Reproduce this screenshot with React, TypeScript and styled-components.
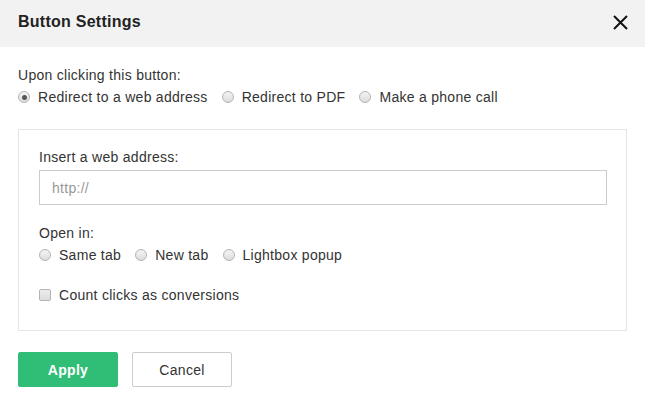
import React from 'react';
import styled, { createGlobalStyle } from 'styled-components';

const GlobalStyle = createGlobalStyle`
  html, body {
    margin: 0;
    padding: 0;
    background: #ffffff;
  }
  body {
    font-family: "Liberation Sans", Arial, sans-serif;
    font-size: 14px;
    letter-spacing: 0.28px;
    color: #333333;
  }
  * {
    box-sizing: border-box;
  }
`;

const Dialog = styled.div`
  width: 645px;
  height: 403px;
  background: #ffffff;
  display: flex;
  flex-direction: column;
`;

const Header = styled.div`
  height: 47px;
  flex-shrink: 0;
  background: #f2f2f2;
  display: flex;
  align-items: center;
  justify-content: space-between;
  padding: 0 16px 0 18px;
`;

const Title = styled.h1`
  margin: 0;
  font-size: 16px;
  font-weight: bold;
  letter-spacing: 0.25px;
  color: #222222;
  line-height: 20px;
  padding-bottom: 4px;
`;

const CloseButton = styled.button`
  width: 18px;
  height: 18px;
  padding: 0;
  border: none;
  background: none;
  display: flex;
  align-items: center;
  justify-content: center;
  margin-bottom: 3px;
  cursor: pointer;
`;

const Body = styled.div`
  padding: 17px 18px 0;
  display: flex;
  flex-direction: column;
`;

const Line = styled.div`
  line-height: 22px;
  height: 22px;
`;

const OptionRow = styled.div`
  display: flex;
  align-items: center;
  height: 22px;
  gap: 14px;
`;

const Option = styled.label`
  display: flex;
  align-items: center;
  gap: 8px;
  line-height: 22px;
  cursor: pointer;
`;

const RadioMark = styled.span<{ $checked?: boolean }>`
  width: 12px;
  height: 12px;
  border-radius: 50%;
  border: 1px solid #b4b4b4;
  background: linear-gradient(#f4f4f4, #dcdcdc);
  display: flex;
  align-items: center;
  justify-content: center;
  flex-shrink: 0;

  &::after {
    content: '';
    width: 5px;
    height: 5px;
    border-radius: 50%;
    background: #555555;
    display: ${({ $checked }) => ($checked ? 'block' : 'none')};
  }
`;

const CheckMark = styled.span`
  width: 12px;
  height: 12px;
  border-radius: 2px;
  border: 1px solid #b4b4b4;
  background: linear-gradient(#ececec, #dcdcdc);
  flex-shrink: 0;
`;

const Panel = styled.div`
  margin-top: 21px;
  border: 1px solid #e5e5e5;
  padding: 16px 20px 24px;
  display: flex;
  flex-direction: column;
`;

const FieldLabel = styled(Line)`
  margin-bottom: 2px;
`;

const UrlInput = styled.input`
  width: 568px;
  height: 35px;
  border: 1px solid #cccccc;
  padding: 0 12px;
  font-family: inherit;
  font-size: 14px;
  letter-spacing: inherit;
  color: #333333;
  outline: none;

  &::placeholder {
    color: #999999;
  }
`;

const Group = styled.div<{ $gap: number }>`
  margin-top: ${({ $gap }) => $gap}px;
`;

const Actions = styled.div`
  margin-top: 21px;
  display: flex;
  gap: 14px;
`;

const Button = styled.button<{ $primary?: boolean }>`
  width: 100px;
  height: 35px;
  border-radius: 2px;
  font-family: inherit;
  font-size: 14px;
  letter-spacing: inherit;
  cursor: pointer;
  border: 1px solid ${({ $primary }) => ($primary ? '#30be76' : '#cccccc')};
  background: ${({ $primary }) => ($primary ? '#30be76' : '#ffffff')};
  color: ${({ $primary }) => ($primary ? '#ffffff' : '#333333')};
  font-weight: ${({ $primary }) => ($primary ? 'bold' : 'normal')};
`;

const Radio = ({ checked, children }: { checked?: boolean; children: React.ReactNode }) => (
  <Option>
    <RadioMark $checked={checked} />
    {children}
  </Option>
);

export default function App() {
  return (
    <>
      <GlobalStyle />
      <Dialog>
        <Header>
          <Title>Button Settings</Title>
          <CloseButton aria-label="Close">
            <svg width="15" height="15" viewBox="0 0 15 15">
              <path d="M1 1 L14 14 M14 1 L1 14" stroke="#111" strokeWidth="2" fill="none" />
            </svg>
          </CloseButton>
        </Header>
        <Body>
          <Line>Upon clicking this button:</Line>
          <OptionRow>
            <Radio checked>Redirect to a web address</Radio>
            <Radio>Redirect to PDF</Radio>
            <Radio>Make a phone call</Radio>
          </OptionRow>
          <Panel>
            <FieldLabel>Insert a web address:</FieldLabel>
            <UrlInput placeholder="http://" />
            <Group $gap={17}>
              <Line>Open in:</Line>
              <OptionRow>
                <Radio>Same tab</Radio>
                <Radio>New tab</Radio>
                <Radio>Lightbox popup</Radio>
              </OptionRow>
            </Group>
            <Group $gap={18}>
              <Option>
                <CheckMark />
                Count clicks as conversions
              </Option>
            </Group>
          </Panel>
          <Actions>
            <Button $primary>Apply</Button>
            <Button>Cancel</Button>
          </Actions>
        </Body>
      </Dialog>
    </>
  );
}
